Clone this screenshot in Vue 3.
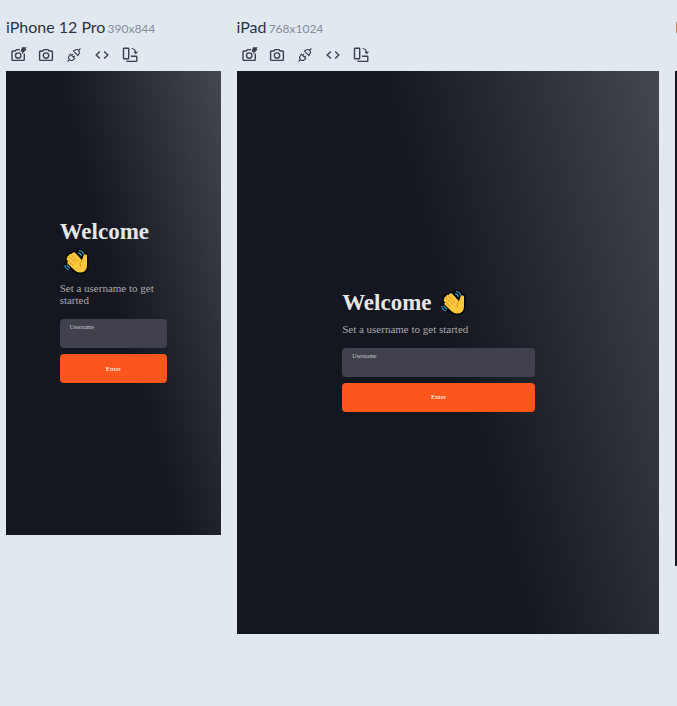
<script setup>
const devices = [
  { id: 'phone', name: 'iPhone 12 Pro', size: '390x844' },
  { id: 'tablet', name: 'iPad', size: '768x1024' },
]
const tools = ['flash', 'camera', 'plug', 'code', 'rotate']
</script>

<template>
  <main class="board">
    <section v-for="d in devices" :key="d.id" class="device">
      <h2 class="name">{{ d.name }} <span class="size">{{ d.size }}</span></h2>
      <div class="tools">
        <button v-for="t in tools" :key="t" type="button" class="tool">
          <svg viewBox="0 0 16 16" class="icon" aria-hidden="true">
            <g v-if="t === 'flash'">
              <path d="M10 2.6H6.5L5.3 4H2.9Q2 4 2 4.9V12.5Q2 13.4 2.9 13.4H13.4Q14.3 13.4 14.3 12.5V6.6" />
              <circle cx="8.2" cy="8.6" r="2.7" />
              <path class="solid" d="M12 .2H16.6L15.4 2H16.8L11.8 7.6 12.4 4.8H10.4Z" />
            </g>
            <g v-else-if="t === 'camera'">
              <path d="M6 2.6H10L11.2 4H13.5Q14.4 4 14.4 4.9V12.5Q14.4 13.4 13.5 13.4H2.5Q1.6 13.4 1.6 12.5V4.9Q1.6 4 2.5 4H4.8Z" />
              <circle cx="8" cy="8.6" r="2.7" />
            </g>
            <g v-else-if="t === 'plug'" class="thin" transform="rotate(-45 8 8)">
              <path d="M-1.2 8H1.6M6 5.2H4.4Q1.6 5.2 1.6 8T4.4 10.8H6ZM6 4.2V11.8M6 6.7H8M6 9.3H8M17.2 8H14.4M10.4 5.2H11.6Q14.4 5.2 14.4 8T11.6 10.8H10.4ZM10.4 4.2V11.8" />
            </g>
            <g v-else-if="t === 'code'">
              <path d="M5.8 4.4L2.2 8L5.8 11.6M10.2 4.4L13.8 8L10.2 11.6" />
            </g>
            <g v-else>
              <path d="M2.1 1.2H6.1Q6.7 1.2 6.7 1.8V11.2Q6.7 11.8 6.1 11.8H2.1Q1.5 11.8 1.5 11.2V1.8Q1.5 1.2 2.1 1.2ZM9 9.2H14.2Q14.8 9.2 14.8 9.8V13.8Q14.8 14.4 14.2 14.4H5.4Q4.8 14.4 4.8 13.6" />
              <path class="hair" d="M9.6 1.5Q13.2 1.7 13.7 5.8M12 4.6L13.8 6.4L15.4 4.6" />
            </g>
          </svg>
        </button>
      </div>
      <div class="screen" :class="d.id">
        <form class="login" @submit.prevent>
          <h1 class="welcome">Welcome
            <svg class="wave" viewBox="0 0 26 26" aria-hidden="true">
              <path class="outline" d="M12.5 3.6L14.5 1Q19 -.6 22.4 3.6L25.4 6.5V19Q24.6 25.8 17 26Q12.6 26 8.6 22.8L6 23.4Q.4 22.6 .4 16L3 13.6 2.4 9Q3 5 7.4 4.6L9.6 2.8Z" />
              <path class="motion" d="M15.8 2.5Q19.8 2.6 20.8 6.6M15.2 4.9Q17.8 5.2 18.4 7.8M1.7 17Q2.3 21.3 6.2 22M4 16.6Q4.5 19 7 19.9" />
              <path class="hand" d="M4.4 9.4Q3.9 7.4 6 7.4Q6.4 5.1 8.6 5.9Q10.5 3.2 12.6 5.2L19 12.2 20.7 7Q22.3 5.4 24 7.6V18Q23.5 24.5 16.8 24.6Q13.8 24.6 11 21.8L4.8 15.8Q3.6 14 5.1 13.2L4 12Q3 10.4 4.4 9.4Z" />
              <path class="crease" d="M8.6 7.2L14.8 13.2M6.2 8.8L12.8 15.2M5.6 13L10.2 17.4M19 12.6Q15.8 15 17.6 18.6" />
            </svg>
          </h1>
          <p class="hint">Set a username to get started</p>
          <div class="field">
            <label :for="'user-' + d.id">Username</label>
            <input :id="'user-' + d.id" type="text" autocomplete="off" />
          </div>
          <button type="submit" class="enter">Enter</button>
        </form>
      </div>
    </section>
    <section class="device">
      <div class="next-name"></div>
      <div class="next-screen"></div>
    </section>
  </main>
</template>

<style>
body {
  margin: 0;
  background: #e1e8f0;
}
</style>

<style scoped>
.board {
  display: grid;
  grid-template-columns: 390fr 768fr 2px;
  column-gap: 16px;
  align-items: start;
  padding: 15px 0 0 6px;
  overflow: hidden;
}
.device {
  min-width: 0;
}
.name {
  height: 24px;
  margin: 0;
  font: 400 16px/24px Lato, sans-serif;
  color: #2b3242;
  white-space: nowrap;
}
.size {
  margin-left: -2px;
  font-size: 12px;
  color: #868d9b;
}
.tools {
  display: flex;
  gap: 4px;
  height: 32px;
}
.tool {
  display: grid;
  place-items: center;
  width: 24px;
  height: 32px;
  padding: 0;
  border: 0;
  background: none;
}
.icon {
  width: 16px;
  height: 16px;
  overflow: visible;
  fill: none;
  stroke: #394052;
  stroke-width: 1.4;
}
.thin,
.hair {
  stroke-width: 1.1;
}
.solid {
  fill: #394052;
  stroke: none;
}
.screen {
  display: flex;
  align-items: center;
  box-sizing: border-box;
  padding: 0 25% 6px;
  background: linear-gradient(255deg, #44474e 0%, #2c2f36 24%, #141620 50%);
  font-family: "Liberation Serif", "Times New Roman", serif;
}
.phone {
  aspect-ratio: 390 / 844;
}
.tablet {
  aspect-ratio: 768 / 1024;
}
.login {
  width: 100%;
  max-width: 193px;
}
.welcome {
  margin: 0 0 5px;
  font-size: 23px;
  line-height: 30px;
  font-weight: 700;
  color: #e6e6e6;
}
.wave {
  width: 26px;
  height: 26px;
  margin-left: 3px;
  vertical-align: -5px;
}
.outline {
  fill: #05070b;
}
.motion {
  fill: none;
  stroke: #2aa3cf;
  stroke-width: 1.2;
}
.hand {
  fill: #ffc83d;
}
.crease {
  fill: none;
  stroke: #d6911d;
  stroke-width: 1;
}
.hint {
  margin: 0 0 13px;
  font-size: 11px;
  line-height: 12px;
  color: #a9a9ab;
}
.field {
  display: flex;
  flex-direction: column;
  box-sizing: border-box;
  height: 29px;
  padding: 4px 10px;
  margin-bottom: 6px;
  border-radius: 4px;
  background: #40414c;
}
.field label {
  font-size: 6px;
  line-height: 8px;
  color: #c4c4c8;
}
.field input {
  flex: 1;
  min-width: 0;
  min-height: 0;
  padding: 0;
  border: 0;
  outline: 0;
  background: transparent;
  color: #fff;
  font: inherit;
  font-size: 8px;
}
.enter {
  display: block;
  width: 100%;
  height: 29px;
  padding: 0;
  border: 0;
  border-radius: 4px;
  background: #fd561d;
  color: #fff;
  font-family: inherit;
  font-size: 7px;
}
.next-name {
  height: 11px;
  margin: 7px 0 38px 1px;
  background: #c58d4c;
}
.next-screen {
  height: 495px;
  background: #141620;
}
</style>
